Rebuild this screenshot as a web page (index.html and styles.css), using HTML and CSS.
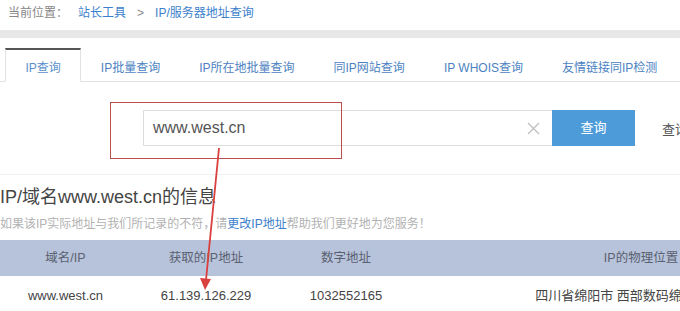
FILE: index.html
```html
<!DOCTYPE html>
<html lang="zh-CN">
<head>
<meta charset="utf-8">
<title>IP/服务器地址查询</title>
<link rel="stylesheet" href="styles.css">
</head>
<body>
<div class="page">
  <div class="crumb">
    <span class="crumb-label">当前位置：</span>
    <a class="crumb-link">站长工具</a>
    <span class="crumb-sep">&gt;</span>
    <a class="crumb-link">IP/服务器地址查询</a>
  </div>
  <div class="band"></div>
  <div class="tabs">
    <div class="tab active">IP查询</div>
    <div class="tab">IP批量查询</div>
    <div class="tab">IP所在地批量查询</div>
    <div class="tab">同IP网站查询</div>
    <div class="tab">IP WHOIS查询</div>
    <div class="tab">友情链接同IP检测</div>
  </div>
  <div class="search">
    <div class="input">
      <span class="input-text">www.west.cn</span>
      <svg class="clear" width="13" height="13" viewBox="0 0 13 13"><path d="M1 1L12 12M12 1L1 12" stroke="#bdbdbd" stroke-width="1.2" fill="none"/></svg>
    </div>
    <div class="btn">查询</div>
    <div class="more">查询</div>
  </div>
  <div class="divider"></div>
  <h2 class="title">IP/域名www.west.cn的信息</h2>
  <p class="note">如果该IP实际地址与我们所记录的不符，请<a class="note-link">更改IP地址</a>帮助我们更好地为您服务！</p>
  <div class="table">
    <div class="thead">
      <div class="c1">域名/IP</div>
      <div class="c2">获取的IP地址</div>
      <div class="c3">数字地址</div>
      <div class="c4">IP的物理位置</div>
    </div>
    <div class="trow">
      <div class="c1">www.west.cn</div>
      <div class="c2">61.139.126.229</div>
      <div class="c3">1032552165</div>
      <div class="c4">四川省绵阳市 西部数码绵阳电信机房</div>
    </div>
  </div>
  <div class="highlight"></div>
  <svg class="arrow" width="680" height="311" viewBox="0 0 680 311">
    <line x1="219" y1="148" x2="206" y2="280" stroke="#d9403e" stroke-width="1.8"/>
    <polygon points="200,278 211,279 205,290" fill="#d9403e"/>
  </svg>
</div>
</body>
</html>
```

FILE: styles.css
```css
* { box-sizing: border-box; }
html, body { margin: 0; padding: 0; background: #fff; }
body {
  font-family: "Liberation Sans", "Noto Sans CJK SC", sans-serif;
  color: #444;
  width: 680px;
  height: 311px;
  overflow: hidden;
}
.page { position: relative; width: 680px; height: 311px; overflow: hidden; }

.crumb {
  height: 26px;
  line-height: 26px;
  padding-left: 8px;
  font-size: 12px;
  display: flex;
}
.crumb-label { color: #888; margin-right: 10px; }
.crumb-link { color: #3c7fcb; }
.crumb-sep { color: #888; margin: 0 11px; }

.band {
  margin-top: 4px;
  height: 8px;
  background: #e7e7e7;
}

.tabs {
  margin-top: 10px;
  padding-left: 5px;
  height: 34px;
  display: flex;
  border-bottom: 1px solid #e2e2e2;
}
.tab {
  flex-shrink: 0;
  padding: 0 18.5px;
  height: 34px;
  line-height: 36px;
  font-size: 12px;
  color: #4d83c2;
  border: 1px solid transparent;
  border-top: 2px solid transparent;
  white-space: nowrap;
}
.tab.active {
  padding: 0 19.5px;
  border-color: #e2e2e2;
  border-top-color: #555;
  border-bottom-color: #fff;
  background: #fff;
  color: #5b8fcc;
  margin-bottom: -1px;
}

.search {
  margin-top: 28px;
  margin-left: 143px;
  display: flex;
  align-items: center;
  height: 36px;
}
.input {
  flex-shrink: 0;
  width: 409px;
  height: 36px;
  border: 1px solid #dcdcdc;
  border-right: none;
  display: flex;
  align-items: center;
  justify-content: space-between;
  padding: 0 9px 0 9px;
}
.input-text { font-size: 16px; color: #555; }
.clear { margin-right: 3px; }
.btn {
  flex-shrink: 0;
  width: 83px;
  height: 36px;
  background: #4d9cd9;
  color: #fff;
  font-size: 13px;
  line-height: 36px;
  text-align: center;
}
.more {
  flex-shrink: 0;
  margin-left: 27px;
  font-size: 13px;
  color: #555;
  white-space: nowrap;
}

.divider {
  margin-top: 28px;
  height: 1px;
  background: #f1f1f1;
}

.title {
  margin: 8px 0 0 0;
  font-size: 18px;
  font-weight: normal;
  line-height: 28px;
  color: #444;
  height: 28px;
}
.note {
  margin: 4px 0 0 0;
  font-size: 12px;
  line-height: 18px;
  color: #b2b2b2;
  white-space: nowrap;
}
.note-link { color: #3c7fcb; }

.table { margin-top: 7px; width: 871px; }
.thead, .trow { display: flex; }
.thead {
  height: 36px;
  line-height: 36px;
  background: #b7c3db;
  color: #5a6170;
  font-size: 12.5px;
}
.trow {
  height: 40px;
  line-height: 40px;
  color: #444;
  font-size: 13px;
}
.c1, .c2, .c3, .c4 { flex-shrink: 0; text-align: center; white-space: nowrap; }
.c1 { width: 131px; }
.c2 { width: 150px; }
.c3 { width: 130px; }
.c4 { width: 460px; }

.highlight {
  position: absolute;
  left: 110px;
  top: 102px;
  width: 232px;
  height: 57px;
  border: 1px solid #b9504c;
}
.arrow { position: absolute; left: 0; top: 0; pointer-events: none; }
```
